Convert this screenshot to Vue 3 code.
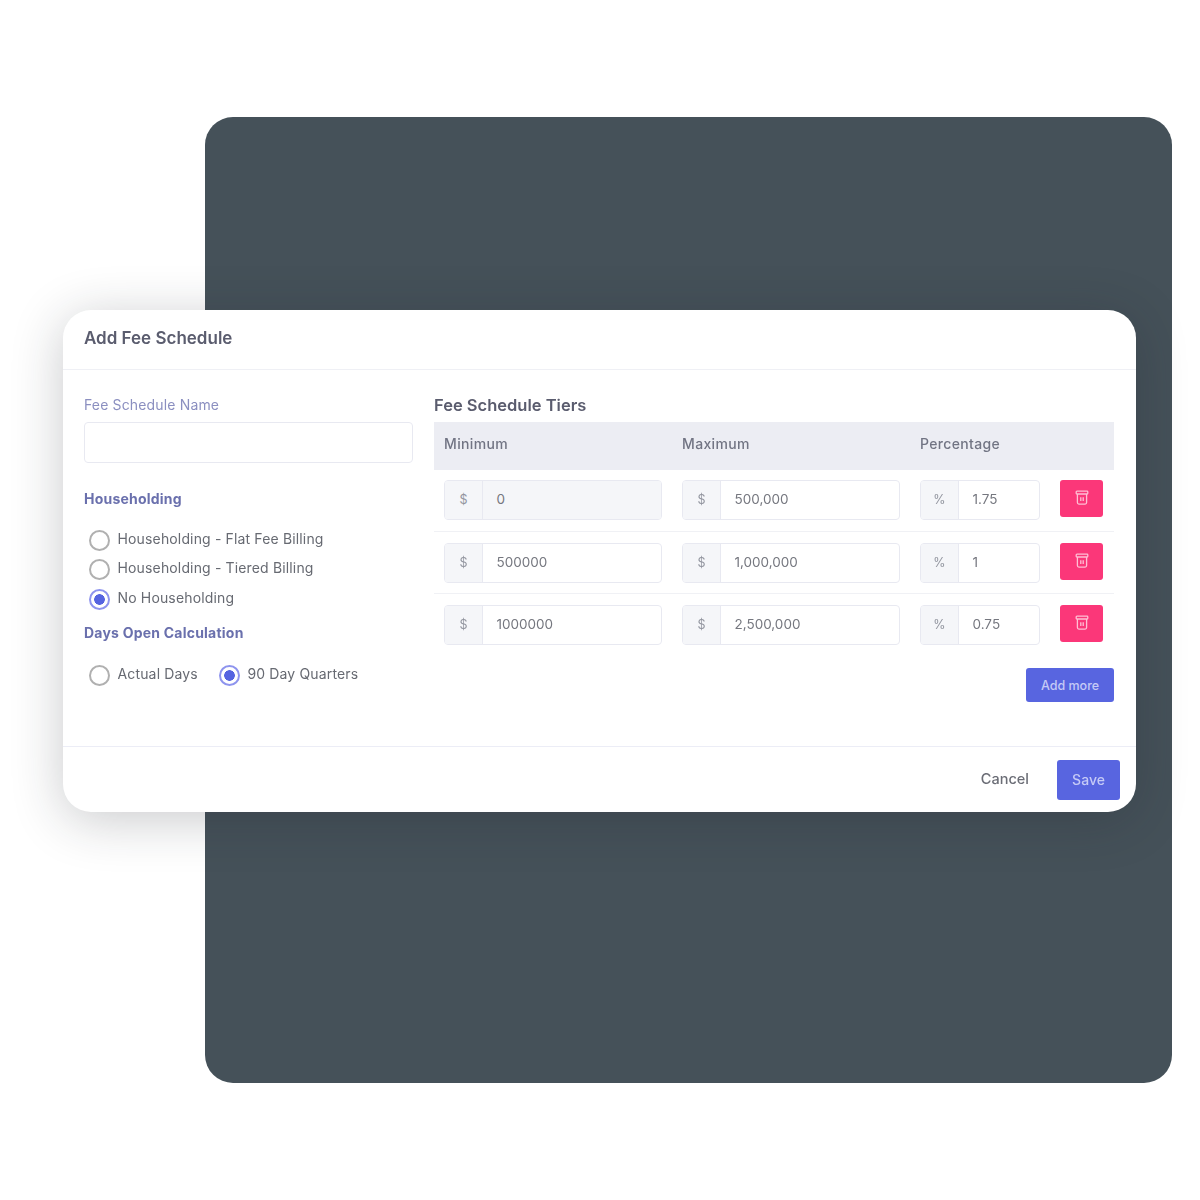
<script setup>
const tiers = [
  { min: '0', max: '500,000', pct: '1.75', locked: true },
  { min: '500000', max: '1,000,000', pct: '1' },
  { min: '1000000', max: '2,500,000', pct: '0.75' },
]
const household = [
  { label: 'Householding - Flat Fee Billing', on: false },
  { label: 'Householding - Tiered Billing', on: false },
  { label: 'No Householding', on: true },
]
const days = [
  { label: 'Actual Days', on: false },
  { label: '90 Day Quarters', on: true },
]
</script>

<template>
  <div class="page">
    <div class="panel"></div>
    <section class="modal">
      <header class="head">Add Fee Schedule</header>
      <div class="body">
        <div class="left">
          <div class="field-label">Fee Schedule Name</div>
          <div class="name-input"></div>
          <div class="group-title first">Householding</div>
          <div class="radio-stack">
            <div v-for="r in household" :key="r.label" class="radio">
              <span class="dot" :class="{ on: r.on }"></span>
              <span class="radio-text">{{ r.label }}</span>
            </div>
          </div>
          <div class="group-title second">Days Open Calculation</div>
          <div class="radio-line">
            <div v-for="r in days" :key="r.label" class="radio">
              <span class="dot" :class="{ on: r.on }"></span>
              <span class="radio-text">{{ r.label }}</span>
            </div>
          </div>
        </div>
        <div class="right">
          <div class="tiers-title">Fee Schedule Tiers</div>
          <div class="table-head">
            <span>Minimum</span>
            <span>Maximum</span>
            <span>Percentage</span>
          </div>
          <div class="tier-list">
            <div v-for="t in tiers" :key="t.min" class="tier">
              <div class="group">
                <span class="addon">$</span>
                <span class="value" :class="{ locked: t.locked }">{{ t.min }}</span>
              </div>
              <div class="group">
                <span class="addon">$</span>
                <span class="value">{{ t.max }}</span>
              </div>
              <div class="group">
                <span class="addon">%</span>
                <span class="value">{{ t.pct }}</span>
              </div>
              <button class="trash" type="button" aria-label="Delete">
                <svg width="14" height="16" viewBox="0 0 14 16" fill="none" stroke="currentColor" stroke-width="1.3">
                  <rect x="1.2" y="1.2" width="11.6" height="2.8" rx="0.8" />
                  <path d="M2.4 4v8.6c0 .9.6 1.5 1.5 1.5h6.2c.9 0 1.5-.6 1.5-1.5V4" />
                  <path d="M5.8 7.2v3.8M8.2 7.2v3.8" />
                </svg>
              </button>
            </div>
          </div>
          <div class="more-line">
            <button class="more" type="button">Add more</button>
          </div>
        </div>
      </div>
      <footer class="foot">
        <span class="cancel">Cancel</span>
        <button class="save" type="button">Save</button>
      </footer>
    </section>
  </div>
</template>

<style>
body { background: #fff; }
</style>

<style scoped>
.page {
  position: relative;
  width: 1200px;
  height: 1200px;
  padding: 117px 28px 0 205px;
  box-sizing: border-box;
  background: #fff;
  font-family: Inter, "Open Sans", sans-serif;
  overflow: hidden;
}
.panel {
  height: 966px;
  border-radius: 28px;
  background: #455159;
}
.modal {
  position: absolute;
  left: 63px;
  top: 310px;
  width: 1073px;
  height: 502px;
  display: flex;
  flex-direction: column;
  border-radius: 28px;
  background: #fff;
  box-shadow: 0 8px 52px rgba(30, 32, 40, 0.24);
}
.head {
  height: 60px;
  box-sizing: border-box;
  padding: 18px 21px 0;
  border-bottom: 1px solid #eff0f5;
  font-size: 17px;
  line-height: 20px;
  font-weight: 600;
  color: #5a5c6e;
  filter: blur(0.6px);
}
.body {
  flex: 1;
  display: grid;
  grid-template-columns: 329px 680px;
  column-gap: 21px;
  padding: 0 22px 0 21px;
  filter: blur(0.6px);
}
.left { padding-top: 26px; }
.field-label {
  font-size: 14px;
  letter-spacing: 0.15px;
  line-height: 17px;
  color: #8b8fc0;
}
.name-input {
  height: 41px;
  margin-top: 9px;
  box-sizing: border-box;
  border: 1.5px solid #e8e9f1;
  border-radius: 4px;
}
.group-title {
  font-size: 14px;
  letter-spacing: 0.22px;
  line-height: 18px;
  font-weight: 700;
  color: #6a70ad;
}
.group-title.first { margin-top: 27px; }
.group-title.second { margin-top: 15px; }
.radio-stack {
  display: flex;
  flex-direction: column;
  gap: 7.5px;
  margin-top: 20px;
  padding-left: 5px;
}
.radio-line {
  display: flex;
  gap: 21px;
  margin-top: 21px;
  padding-left: 5px;
}
.radio {
  display: flex;
  align-items: center;
  gap: 7.5px;
  height: 22px;
  font-size: 14px;
  letter-spacing: 0.15px;
  color: #676a72;
}
.radio-text { padding-bottom: 2px; }
.dot {
  width: 21px;
  height: 21px;
  margin-top: 2px;
  box-sizing: border-box;
  border: 2px solid #b0b0b0;
  border-radius: 50%;
  background: #fff;
  flex: none;
}
.dot.on {
  border-color: #8e94ee;
  background: radial-gradient(circle, #5664e0 0 5px, #fff 5.6px);
}
.right { padding-top: 26px; }
.tiers-title {
  font-size: 16.5px;
  line-height: 18px;
  font-weight: 600;
  color: #5a5c6e;
}
.table-head {
  display: grid;
  grid-template-columns: 238px 238px 1fr;
  align-items: center;
  height: 48px;
  margin-top: 8px;
  padding: 0 0 6px 10px;
  box-sizing: border-box;
  background: #ecedf3;
  font-size: 14px;
  letter-spacing: 0.35px;
  font-weight: 500;
  color: #717483;
}
.tier {
  display: grid;
  grid-template-columns: 218px 218px 120px 43px;
  column-gap: 20px;
  padding: 10px 10px 0;
  border-bottom: 1.5px solid #f0f1f5;
  height: 62px;
  box-sizing: border-box;
}
.tier + .tier { padding-top: 11px; }
.tier:last-child { border-bottom: 0; }
.group {
  display: flex;
  height: 39.5px;
  box-sizing: border-box;
  border: 1.5px solid #e8e9f1;
  border-radius: 4px;
  overflow: hidden;
  font-size: 13.5px;
  line-height: 37px;
  color: #75777f;
}
.addon {
  width: 37px;
  flex: none;
  text-align: center;
  background: #f5f6f9;
  border-right: 1.5px solid #e8e9f1;
  color: #92959f;
  font-size: 12.5px;
}
.value {
  flex: 1;
  padding-left: 13.5px;
}
.value.locked { background: #f5f6f9; }
.trash {
  width: 43px;
  height: 37px;
  padding: 0 0 2px;
  border: 0;
  border-radius: 3px;
  background: #fb3779;
  color: #ffbfd4;
  display: flex;
  align-items: center;
  justify-content: center;
}
.more-line {
  display: flex;
  justify-content: flex-end;
  margin-top: 12px;
}
.more {
  width: 88px;
  height: 34px;
  border: 0;
  border-radius: 3px;
  background: #5865e0;
  color: #c5caf6;
  font-family: inherit;
  font-size: 12.5px;
  font-weight: 500;
}
.foot {
  height: 66px;
  box-sizing: border-box;
  border-top: 1px solid #ecedf6;
  display: flex;
  justify-content: flex-end;
  align-items: flex-start;
  gap: 28px;
  padding: 13px 16px 0 0;
  filter: blur(0.6px);
}
.cancel {
  font-size: 14.5px;
  line-height: 38px;
  font-weight: 500;
  color: #6b6d76;
}
.save {
  width: 63px;
  height: 40px;
  padding: 0 0 2px;
  border: 0;
  border-radius: 3px;
  background: #5865e0;
  color: #c5caf6;
  font-family: inherit;
  font-size: 14px;
  font-weight: 500;
}
</style>
